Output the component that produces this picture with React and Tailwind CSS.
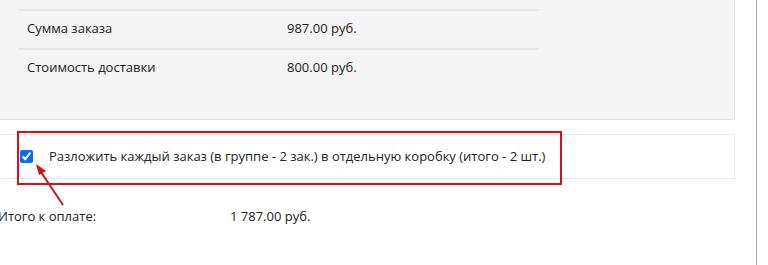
import { useState } from "react";

const rows = [
  { label: "Сумма заказа", value: "987.00 руб." },
  { label: "Стоимость доставки", value: "800.00 руб." },
];

const App = () => {
  const [separate, setSeparate] = useState(true);

  return (
    <div className="relative w-[768px] h-[265px] overflow-hidden bg-white text-[13px] text-[#222] font-['Open_Sans','Liberation_Sans',sans-serif]">
      <div className="w-[757px] h-full border-r border-[#a9a9a9]">
        {/* order totals */}
        <div className="w-[735px] h-[120px] bg-[#f4f4f4] border-r border-b border-[#e2e2e2] pt-[9px] pl-[19px]">
          <div className="w-[520px]">
            {rows.map(row => (
              <div key={row.label} className="flex items-center h-[39px] pb-[2px] border-t-2 border-[#e6e6e6]">
                <span className="w-[260px] pl-[8px]">{row.label}</span>
                <span className="ml-[8px]">{row.value}</span>
              </div>
            ))}
          </div>
        </div>

        {/* box option */}
        <div className="mt-[14px] w-[735px] h-[45px] border border-l-0 border-[#e8e8e8] flex items-center pl-[20px]">
          <input
            type="checkbox"
            checked={separate}
            onChange={e => setSeparate(e.target.checked)}
            className="w-[13px] h-[13px] accent-[#0a6cf0] m-0"
          />
          <span className="ml-[16px]">
            Разложить каждый заказ (в группе - 2 зак.) в отдельную коробку (итого - 2 шт.)
          </span>
        </div>

        <div className="mt-[28px] flex items-center -ml-[2px]">
          <span className="w-[232px]">Итого к оплате:</span>
          <span>1 787.00 руб.</span>
        </div>
      </div>

      {/* annotation */}
      <div className="absolute left-[17px] top-[131px] w-[545px] h-[54px] border-2 border-[#d8101e] pointer-events-none" />
      <svg className="absolute left-0 top-0 pointer-events-none" width="768" height="265">
        <line x1="63" y1="205" x2="41" y2="172" stroke="#d0101c" strokeWidth="2" />
        <polygon points="36,164 46,171 39,175" fill="#d0101c" />
      </svg>
    </div>
  );
};

export default App;
